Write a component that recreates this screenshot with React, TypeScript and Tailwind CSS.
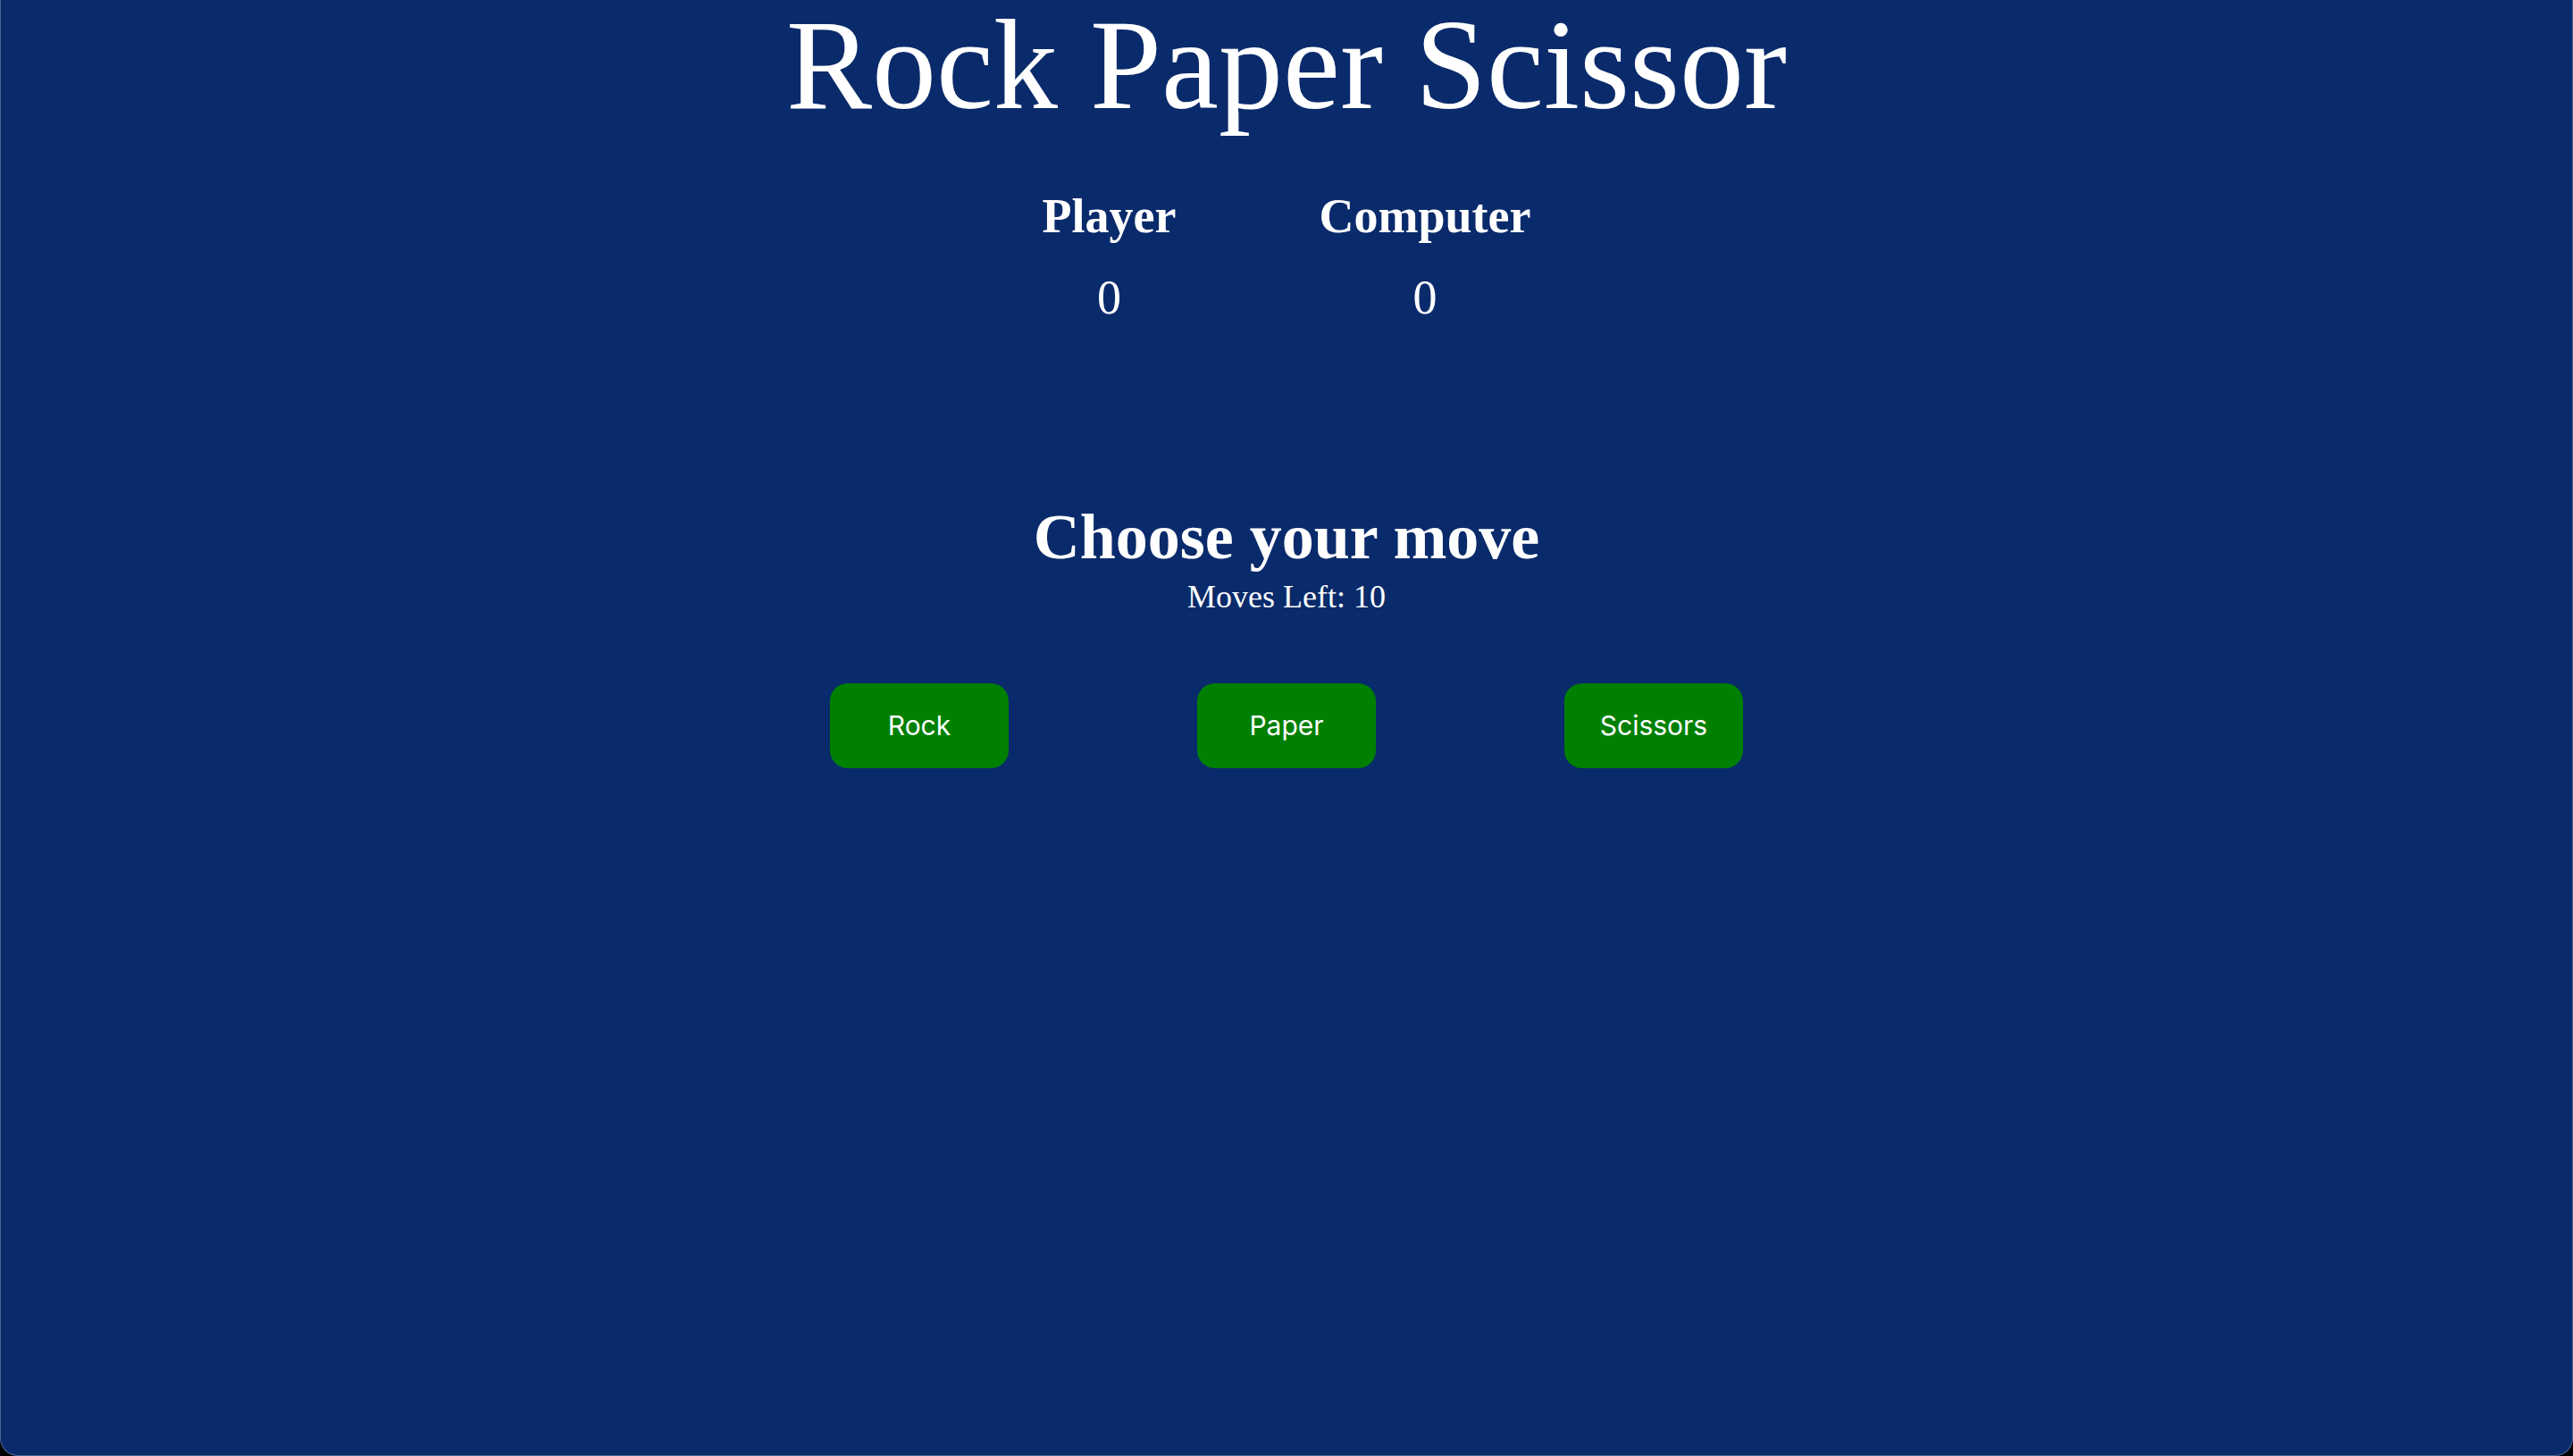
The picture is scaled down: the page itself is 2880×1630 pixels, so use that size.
import { useState } from "react";

type Move = "Rock" | "Paper" | "Scissors";

const moves: Move[] = ["Rock", "Paper", "Scissors"];

function App() {
  const [playerScore, setPlayerScore] = useState(0);
  const [computerScore, setComputerScore] = useState(0);
  const [movesLeft, setMovesLeft] = useState(10);

  function play(move: Move) {
    if (movesLeft <= 0) return;
    const computer = moves[Math.floor(Math.random() * 3)];
    if (move === computer) {
      // tie
    } else if (
      (move === "Rock" && computer === "Scissors") ||
      (move === "Paper" && computer === "Rock") ||
      (move === "Scissors" && computer === "Paper")
    ) {
      setPlayerScore(playerScore + 1);
    } else {
      setComputerScore(computerScore + 1);
    }
    setMovesLeft(movesLeft - 1);
  }

  return (
    <div className="bg-black w-full h-[1630px]">
      <div
        className="h-full w-full bg-[#0a2b6b] text-white rounded-b-[20px] border-x border-b border-[#4b6396] overflow-hidden"
        style={{ fontFamily: '"Liberation Serif", "Times New Roman", serif' }}
      >
        <h1 className="text-center text-[144px] leading-none pt-[1px] m-0">
          Rock Paper Scissor
        </h1>

        <div className="flex justify-center gap-[160px] mt-[70px]">
          <div className="text-center">
            <h2 className="text-[54px] font-bold leading-none">Player</h2>
            <p className="text-[54px] leading-none mt-[37px]">{playerScore}</p>
          </div>
          <div className="text-center">
            <h2 className="text-[54px] font-bold leading-none">Computer</h2>
            <p className="text-[54px] leading-none mt-[37px]">{computerScore}</p>
          </div>
        </div>

        <div className="text-center mt-[205px]">
          <h2 className="text-[72px] font-bold leading-none">Choose your move</h2>
          <p className="text-[36px] leading-none mt-[13px]">Moves Left: {movesLeft}</p>
        </div>

        <div className="flex justify-center gap-[211px] mt-[79px]">
          {moves.map((m) => (
            <button
              key={m}
              onClick={() => play(m)}
              className="w-[200px] h-[95px] bg-[#008000] rounded-[20px] text-white text-[30px]"
              style={{ fontFamily: "Inter, Roboto, sans-serif" }}
            >
              {m}
            </button>
          ))}
        </div>
      </div>
    </div>
  );
}

export default App;
